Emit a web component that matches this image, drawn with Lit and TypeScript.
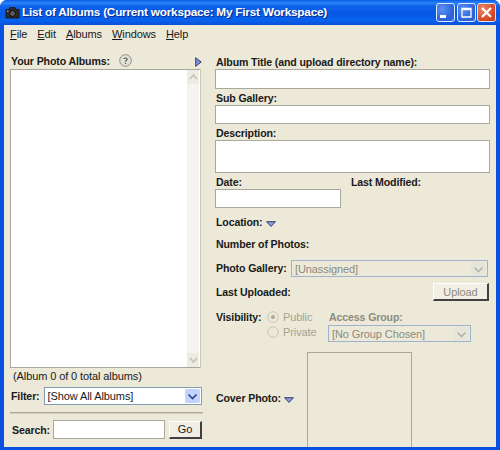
import { LitElement, html, css, svg } from "lit";
import { customElement } from "lit/decorators.js";

const chevron = (c: string, w = 1.6) => svg`<path d="M3.5 5.5 L7.5 9.5 L11.5 5.5" fill="none" stroke="${c}" stroke-width="${w}"/>`;

const downTri = html`<svg class="tri" width="10" height="6" viewBox="0 0 10 6"><path d="M.5 .7H9.5L5 5.4Z" fill="#8b9be0" stroke="#24306a" stroke-width=".9"/></svg>`;

@customElement("app-root")
export class AppRoot extends LitElement {
  static styles = css`
    :host { display: block; width: 500px; height: 450px; font: 11px "Liberation Sans", Arial, sans-serif; letter-spacing: -0.1px; color: #1a1a1a; overflow: hidden; }
    * { box-sizing: border-box; }
    .win { width: 500px; height: 450px; display: flex; flex-direction: column; background: #0a50e0; border-radius: 7px 7px 0 0; overflow: hidden; }
    .title { height: 25px; flex: none; display: flex; align-items: center; padding: 0 4px 0 5px;
      background: linear-gradient(#0a5ae6 0, #2a86f8 3px, #0f62ea 6px, #0558e6 14px, #0862ee 20px, #0a50d8 25px); }
    .cam { margin-right: 2px; }
    .title-text { flex: 1; color: #fff; font-weight: bold; font-size: 11.8px; letter-spacing: -0.24px; text-shadow: 1px 1px 0 #0a2c8c; white-space: nowrap; padding-bottom: 1px; }
    .wbtn { width: 19px; height: 19px; border: 1px solid #dfe8fb; border-radius: 3px; margin-left: 1.5px; display: flex; align-items: center; justify-content: center;
      background: radial-gradient(circle at 30% 30%, #5c90f4, #2a5fd8 70%, #3f74e6); }
    .wbtn.close { background: radial-gradient(circle at 30% 30%, #e88a6a, #d8482a 65%, #c23a18); }
    .body { flex: 1; min-height: 0; margin: 0 4px 3px 4px; background: #ece9d8; display: flex; flex-direction: column; }
    .menu { height: 18px; flex: none; display: flex; align-items: center; padding: 0 0 0 6px; gap: 10px; }
    .menu u { text-underline-offset: 1px; }
    .main { flex: 1; min-height: 0; display: grid; grid-template-columns: 193px 1fr; padding-left: 6px; column-gap: 12px; overflow: hidden; }
    .left { display: flex; flex-direction: column; padding-top: 9px; }
    .b { font-weight: bold; font-size: 10.6px; letter-spacing: -0.13px; }
    .albums-h { height: 17px; display: flex; align-items: center; padding-left: 1px; }
    .help { margin-left: 9px; }
    .arrow { margin-left: auto; margin-right: 1px; margin-top: 3px; }
    .list { height: 299px; flex: none; width: 191px; background: #fff; border: 1px solid #a9a89c; border-right-color: #c9c8bc; display: flex; justify-content: flex-end; }
    .sb { width: 12px; background: #f5f4ee; display: flex; flex-direction: column; justify-content: space-between; margin-right: 1px; }
    .sbb { width: 12px; height: 14px; background: #ecebe4; display: flex; align-items: center; justify-content: center; }
    .count { height: 16px; display: flex; align-items: center; padding-left: 3px; }
    .filter { display: flex; align-items: center; margin-top: 3px; padding-left: 1px; gap: 4px; }
    .sel { height: 18px; border: 1px solid #7f9db9; background: #fff; display: flex; align-items: center; justify-content: space-between; padding: 0 1px 0 3px; }
    .sel.filt { width: 158px; }
    .sel .btn { width: 15px; height: 14px; border-radius: 2px; background: #c3d3fb; display: flex; align-items: center; justify-content: center; }
    .sel.dis { background: #ece9d8; color: #8c8b80; border-color: #9fb4cc; }
    .sel.dis .btn { background: #e6e5dc; }
    .rule { height: 2px; width: 193px; margin-top: 7px; background: #aca899; border-bottom: 1px solid #d4d1c0; }
    .search { display: flex; align-items: center; margin-top: 6px; padding-left: 2px; }
    input, textarea { display: block; background: #fff; border: 1px solid #a9a89c; outline: none; padding: 0; margin: 0; resize: none; font: inherit; }
    .search input { width: 112px; height: 19px; margin-left: 3px; }
    .push { height: 18px; background: #f1efe4; border: 1px solid #fff; border-right: 2px solid #404040; border-bottom: 2px solid #404040; display: flex; align-items: center; justify-content: center; }
    .go { width: 33px; margin-left: 4px; }
    .right { display: flex; flex-direction: column; padding-top: 13px; min-width: 0; padding-right: 6px; }
    .lab { height: 13px; line-height: 13px; white-space: nowrap; padding-left: 1px; }
    .full { width: 275px; height: 19px; }
    .first { height: 20px; }
    .s1 { margin-top: 3px; }
    .ta { height: 33px; }
    .daterow { margin-top: 3px; display: grid; grid-template-columns: 135px 1fr; }
    .date { width: 126px; height: 19px; }
    .row { display: flex; align-items: center; }
    .tri { margin-left: 3px; margin-top: 2px; }
    .loc { margin-top: 8px; }
    .num { margin-top: 9px; }
    .pg { margin-top: 9px; height: 17px; }
    .pg .sel { width: 197px; margin-left: auto; height: 17px; margin-right: 2px; }
    .up { margin-top: 6px; height: 18px; justify-content: space-between; }
    .upload { width: 56px; color: #8c8b80; margin-right: 1px; }
    .vis { margin-top: 8px; display: grid; grid-template-columns: 52px 61px 1fr; }
    .vis .lab { height: 16px; line-height: 16px; }
    .radios { display: flex; flex-direction: column; }
    .rad { display: flex; align-items: center; height: 15.5px; color: #a3a295; gap: 4px; }
    .access { color: #8c8b80; }
    .access .sel { width: 143px; height: 17px; }
    .cover { margin-top: 10px; display: grid; grid-template-columns: 92px 105px; flex: 1; min-height: 0; }
    .cover .lab { margin-top: 40px; display: flex; align-items: center; }
    .box { height: 96px; border: 1px solid #a9a89c; border-bottom: none; }
  `;

  private sel(text: string, cls: string, chev: string) {
    return html`<div class="sel ${cls}"><span>${text}</span><span class="btn"><svg width="15" height="14" viewBox="0 0 15 14">${chevron(chev)}</svg></span></div>`;
  }

  render() {
    return html`
    <div class="win">
      <div class="title">
        <svg class="cam" width="15" height="13" viewBox="0 0 15 13"><path d="M1 3.5H4L5 1.5H10L11 3.5H14V12H1Z" fill="#2a2a2a" stroke="#111" stroke-width=".8"/><circle cx="7.5" cy="7.5" r="3" fill="#5a5a5a" stroke="#0a0a0a"/><rect x="2" y="4.5" width="1.6" height="1.2" fill="#b0b0b0"/></svg>
        <span class="title-text">List of Albums (Current workspace: My First Workspace)</span>
        <div class="wbtn"><svg width="17" height="17" viewBox="0 0 17 17"><rect x="3" y="11" width="6" height="3" fill="#fff"/></svg></div>
        <div class="wbtn"><svg width="17" height="17" viewBox="0 0 17 17"><path d="M4 4.5H13V13H4Z" fill="none" stroke="#fff" stroke-width="1.3"/><rect x="4" y="4" width="9" height="2.2" fill="#fff"/></svg></div>
        <div class="wbtn close"><svg width="17" height="17" viewBox="0 0 17 17"><path d="M4 4L13 13M13 4L4 13" stroke="#fff" stroke-width="2.2"/></svg></div>
      </div>
      <div class="body">
        <div class="menu">
          <span><u>F</u>ile</span><span><u>E</u>dit</span><span><u>A</u>lbums</span><span><u>W</u>indows</span><span><u>H</u>elp</span>
        </div>
        <div class="main">
          <div class="left">
            <div class="albums-h b"><span>Your Photo Albums:</span>
              <svg class="help" width="13" height="13" viewBox="0 0 13 13"><circle cx="6.5" cy="6.5" r="5.8" fill="#e2e1da" stroke="#8e8d86"/><path d="M4.7 5C4.8 3.7 8.2 3.5 8.2 5.2C8.2 6.4 6.5 6.3 6.5 7.8M6.5 8.8V10" fill="none" stroke="#555" stroke-width="1.2"/></svg>
              <svg class="arrow" width="7" height="10" viewBox="0 0 7 10"><path d="M.7 .7L6.2 5L.7 9.3Z" fill="#7f8fd8" stroke="#24306a" stroke-width=".9"/></svg>
            </div>
            <div class="list"><div class="sb">
              <div class="sbb"><svg width="11" height="10" viewBox="0 0 11 10"><path d="M2 7L5.5 3L9 7" fill="none" stroke="#c4c3b8" stroke-width="1.6"/></svg></div>
              <div class="sbb"><svg width="11" height="10" viewBox="0 0 11 10"><path d="M2 3L5.5 7L9 3" fill="none" stroke="#c4c3b8" stroke-width="1.6"/></svg></div>
            </div></div>
            <div class="count">(Album 0 of 0 total albums)</div>
            <div class="filter"><span class="b">Filter:</span>${this.sel("[Show All Albums]", "filt", "#2a3f8f")}</div>
            <div class="rule"></div>
            <div class="search"><span class="b">Search:</span><input type="text" /><div class="push go">Go</div></div>
          </div>
          <div class="right">
            <div class="lab b">Album Title (and upload directory name):</div>
            <input class="full first" type="text" />
            <div class="lab b s1">Sub Gallery:</div>
            <input class="full" type="text" />
            <div class="lab b s1">Description:</div>
            <textarea class="full ta"></textarea>
            <div class="daterow">
              <div><div class="lab b">Date:</div><input class="date" type="text" /></div>
              <div class="lab b">Last Modified:</div>
            </div>
            <div class="row lab b loc">Location:${downTri}</div>
            <div class="lab b num">Number of Photos:</div>
            <div class="row pg"><span class="lab b">Photo Gallery:</span>${this.sel("[Unassigned]", "dis", "#b4b3a8")}</div>
            <div class="row up"><span class="lab b">Last Uploaded:</span><div class="push upload">Upload</div></div>
            <div class="vis">
              <div class="lab b">Visibility:</div>
              <div class="radios">
                <div class="rad"><svg width="12" height="12" viewBox="0 0 12 12"><circle cx="6" cy="6" r="5.3" fill="#ece9d8" stroke="#c6c5b8"/><circle cx="6" cy="6" r="2" fill="#a8a79c"/></svg>Public</div>
                <div class="rad"><svg width="12" height="12" viewBox="0 0 12 12"><circle cx="6" cy="6" r="5.3" fill="#ece9d8" stroke="#c6c5b8"/></svg>Private</div>
              </div>
              <div class="access"><div class="lab b">Access Group:</div>${this.sel("[No Group Chosen]", "dis", "#b4b3a8")}</div>
            </div>
            <div class="cover">
              <div class="lab b">Cover Photo:${downTri}</div>
              <div class="box"></div>
            </div>
          </div>
        </div>
      </div>
    </div>`;
  }
}
